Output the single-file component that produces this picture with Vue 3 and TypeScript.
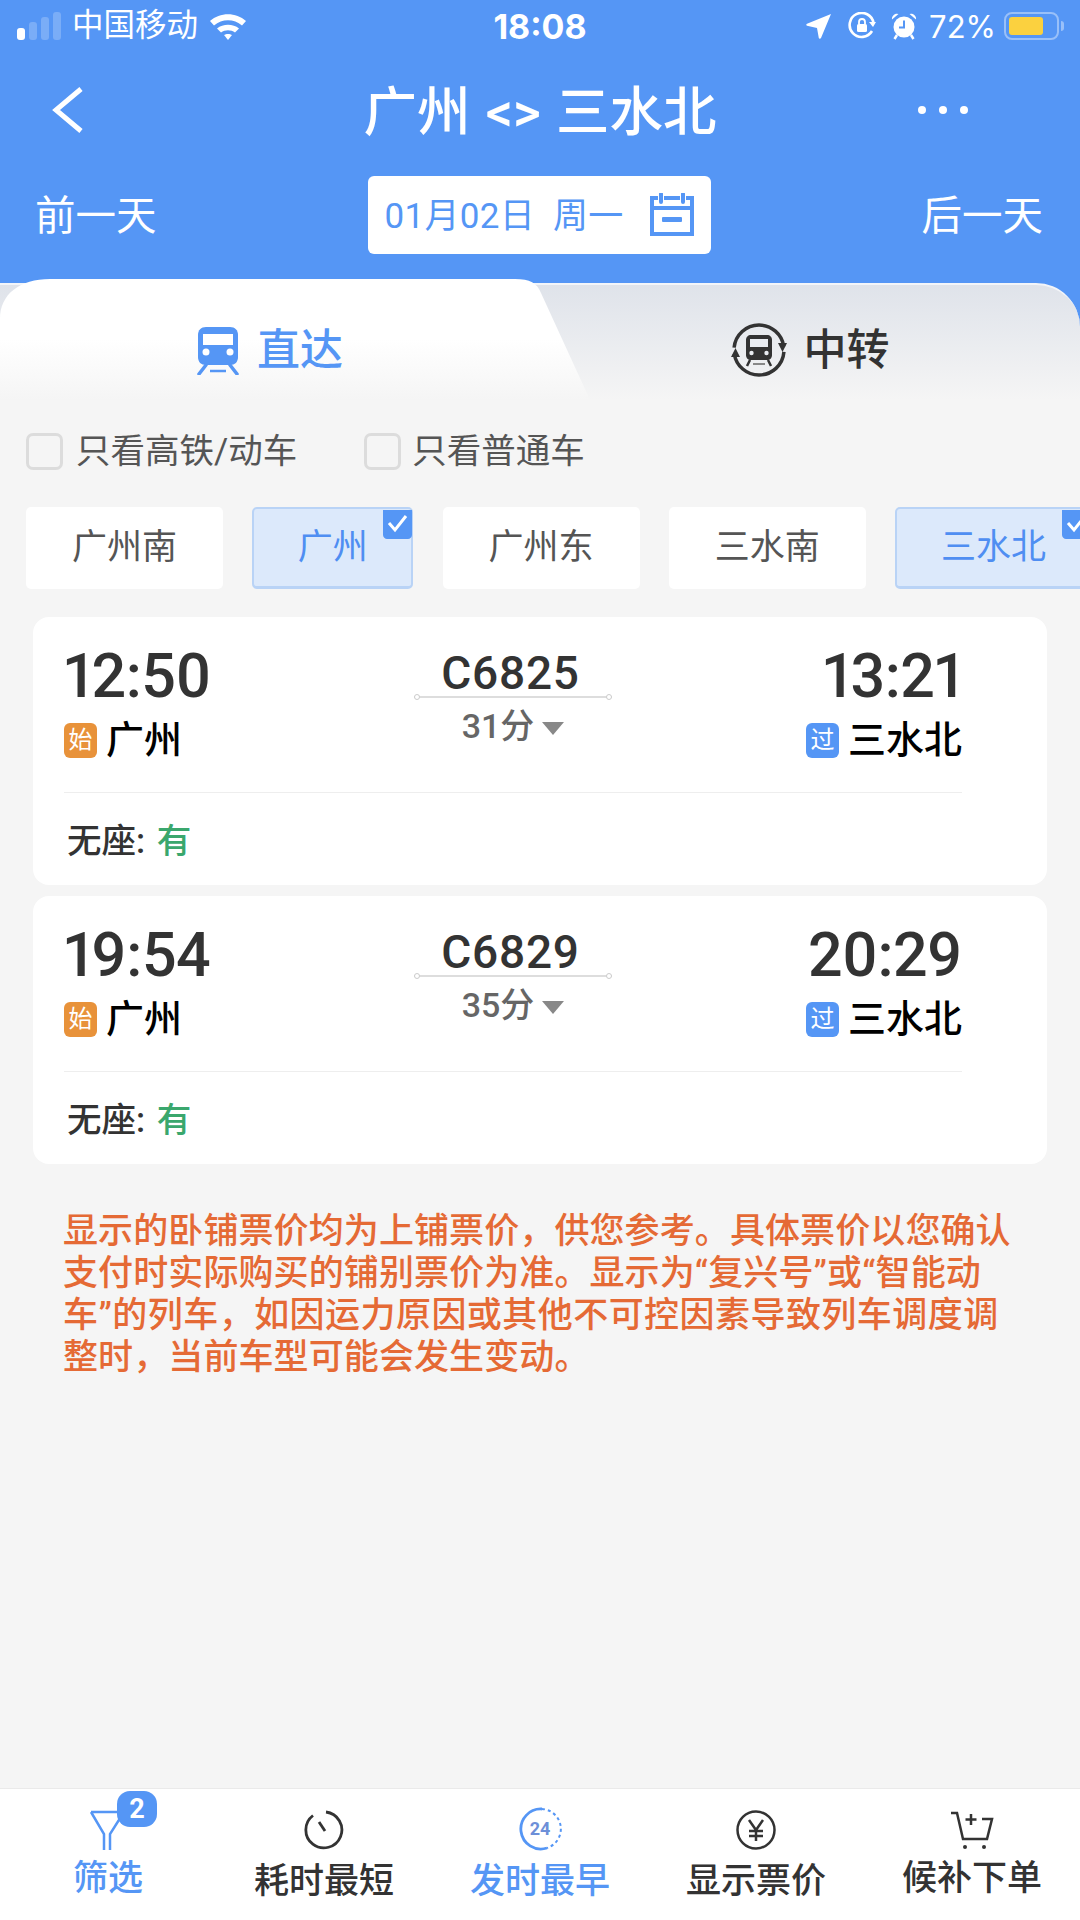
<script setup lang="ts">
interface Train {
  id: string
  from: string
  to: string
  start: string
  end: string
  cost: string
}

const stations = [
  { name: '广州南', on: false },
  { name: '广州', on: true },
  { name: '广州东', on: false },
  { name: '三水南', on: false },
  { name: '三水北', on: true },
]

const trains: Train[] = [
  { id: 'C6825', from: '广州', to: '三水北', start: '12:50', end: '13:21', cost: '31分' },
  { id: 'C6829', from: '广州', to: '三水北', start: '19:54', end: '20:29', cost: '35分' },
]

const notice = [
  '显示的卧铺票价均为上铺票价，供您参考。具体票价以您确认',
  '支付时实际购买的铺别票价为准。显示为“复兴号”或“智能动',
  '车”的列车，如因运力原因或其他不可控因素导致列车调度调',
  '整时，当前车型可能会发生变动。',
]
</script>

<template>
  <div class="page">
    <header class="header">
      <div class="status">
        <div class="status-left">
          <span class="signal">
            <i class="on" style="height: 12px"></i>
            <i style="height: 18px"></i>
            <i style="height: 23px"></i>
            <i style="height: 28px"></i>
          </span>
          <span class="carrier">中国移动</span>
          <svg class="wifi" width="38" height="28" viewBox="0 0 38 28">
            <path d="M1 9C11 0 27 0 37 9L33 13.500C25 6.500 13 6.500 5 13.500Z" fill="#fff" />
            <path d="M8 16.500C14 11.500 24 11.500 30 16.500L26 20.500C22 17.500 16 17.500 12 20.500Z" fill="#fff" />
            <path d="M15 23C17 21.500 21 21.500 23 23L19 28Z" fill="#fff" />
          </svg>
        </div>
        <span class="clock">18:08</span>
        <div class="status-right">
          <svg width="26" height="26" viewBox="0 0 26 26">
            <path d="M25 1L15 25C14.500 26 13 26 12.800 25L11 15L1 12.800C0 12.500 0 11.200 1 10.800Z" fill="#fff" />
          </svg>
          <svg width="28" height="28" viewBox="0 0 28 28" class="rot">
            <path d="M24 19A12 12 0 1 1 25.500 11" fill="none" stroke="#fff" stroke-width="2.600" />
            <path d="M21 10H28L25 15Z" fill="#fff" />
            <rect x="9" y="12" width="10" height="8" rx="1.500" fill="#fff" />
            <path d="M11 12V10A3 3 0 0 1 17 10V12" fill="none" stroke="#fff" stroke-width="1.800" />
          </svg>
          <svg width="26" height="28" viewBox="0 0 26 28" class="alarm">
            <circle cx="13" cy="15" r="10.500" fill="#fff" />
            <path d="M13 8.500V15.500H8" fill="none" stroke="#5596f5" stroke-width="2" />
            <path d="M1 7.500A5 5 0 0 1 7.500 2ZM25 7.500A5 5 0 0 0 18.500 2Z" fill="#fff" />
            <path d="M6 23L3.500 27M20 23L22.500 27" stroke="#fff" stroke-width="2.500" />
          </svg>
          <span class="percent">72%</span>
          <span class="battery"><i></i></span>
          <span class="nub"></span>
        </div>
      </div>

      <div class="title-row">
        <svg width="32" height="46" viewBox="0 0 32 46">
          <path d="M29 2L4 23L29 44" fill="none" stroke="#fff" stroke-width="5" />
        </svg>
        <h1>广州 &lt;&gt; 三水北</h1>
        <span class="more"><i></i><i></i><i></i></span>
      </div>

      <div class="date-row">
        <span>前一天</span>
        <div class="date-box">
          <span>01月02日&nbsp;&nbsp;周一</span>
          <svg width="46" height="44" viewBox="0 0 46 44">
            <path d="M9 5H3V41H43V5H37M15 5H31" fill="none" stroke="#5596f5" stroke-width="4" />
            <path d="M2 15H44" stroke="#5596f5" stroke-width="4" />
            <path d="M12 1V9M34 1V9" stroke="#5596f5" stroke-width="4" stroke-linecap="round" />
            <rect x="13" y="24" width="20" height="5" rx="1" fill="#5596f5" />
          </svg>
        </div>
        <span>后一天</span>
      </div>
    </header>

    <section class="tabs">
      <div class="tabs-back"></div>
      <svg class="tab-shape" width="600" height="121" viewBox="0 0 600 121">
        <defs>
          <linearGradient id="tabFade" x1="0" y1="0" x2="0" y2="1">
            <stop offset="0.5" stop-color="#fff" />
            <stop offset="1" stop-color="#f5f5f5" />
          </linearGradient>
        </defs>
        <path d="M0 121V40C0 15 20 0 50 0H515C530 0 537 4 541 14L590 121Z" fill="url(#tabFade)" />
      </svg>
      <div class="tab tab-on">
        <svg width="42" height="48" viewBox="0 0 42 48">
          <path d="M9 0H33C38 0 41 3 41 8V30C41 35 38 38 33 38H9C4 38 1 35 1 30V8C1 3 4 0 9 0Z" fill="#5596f5" />
          <path d="M6 7H36V18H6Z" fill="#fff" />
          <circle cx="9" cy="25" r="3.500" fill="#fff" />
          <circle cx="33" cy="25" r="3.500" fill="#fff" />
          <path d="M9 38L2 47M33 38L40 47" stroke="#5596f5" stroke-width="3.500" stroke-linecap="round" />
          <path d="M13 44H29" stroke="#5596f5" stroke-width="2.500" />
        </svg>
        <span>直达</span>
      </div>
      <div class="tab">
        <svg width="56" height="56" viewBox="0 0 56 56">
          <circle cx="28" cy="28" r="25" fill="none" stroke="#333" stroke-width="3.500" stroke-dasharray="72 6.500" stroke-dashoffset="-2" />
          <path d="M47 21H56L51.500 30ZM0 35H9L4.500 26Z" fill="#333" />
          <path d="M20 13H36C39 13 41 15 41 18V33C41 36 39 38 36 38H20C17 38 15 36 15 33V18C15 15 17 13 20 13Z" fill="#333" />
          <path d="M19 17H37V25H19Z" fill="#e9ecf1" />
          <circle cx="20.500" cy="31" r="2.200" fill="#e9ecf1" />
          <circle cx="35.500" cy="31" r="2.200" fill="#e9ecf1" />
          <path d="M19 38L16 44M37 38L40 44" stroke="#333" stroke-width="2.500" />
          <path d="M22 42H34" stroke="#888" stroke-width="2" />
        </svg>
        <span>中转</span>
      </div>
    </section>

    <main class="main">
      <div class="checks">
        <label><i></i>只看高铁/动车</label>
        <label class="check-tight"><i></i>只看普通车</label>
      </div>

      <div class="chips">
        <div v-for="s in stations" :key="s.name" class="chip" :class="{ 'chip-on': s.on, 'chip-short': s.name.length === 2 }">
          {{ s.name }}
          <svg v-if="s.on" class="tick" width="29" height="29" viewBox="0 0 29 29">
            <path d="M0 0H29V25C29 27 27 29 25 29H4C2 29 0 27 0 25Z" fill="#5596f5" />
            <path d="M6 13L12 20L23 6" fill="none" stroke="#fff" stroke-width="3" />
          </svg>
        </div>
      </div>

      <article v-for="t in trains" :key="t.id" class="card">
        <div class="route">
          <div class="end">
            <div class="time">{{ t.start }}</div>
            <div class="stop"><b class="badge orange">始</b>{{ t.from }}</div>
          </div>
          <div class="mid">
            <div class="code">{{ t.id }}</div>
            <div class="rail"></div>
            <div class="cost">{{ t.cost }}<i class="arrow"></i></div>
          </div>
          <div class="end end-right">
            <div class="time">{{ t.end }}</div>
            <div class="stop"><b class="badge blue">过</b>{{ t.to }}</div>
          </div>
        </div>
        <div class="seat">无座: <em>有</em></div>
      </article>

      <div class="notice">
        <p v-for="line in notice" :key="line">{{ line }}</p>
      </div>
    </main>

    <nav class="bar">
      <div class="item item-on item-raised">
        <svg width="40" height="40" viewBox="0 0 40 40">
          <path d="M3 2H36M3 2L16 24V40M36 2L22 24V40" fill="none" stroke="#5596f5" stroke-width="2.500" />
        </svg>
        <b class="count">2</b>
        <span>筛选</span>
      </div>
      <div class="item">
        <svg width="40" height="40" viewBox="0 0 40 40">
          <path d="M22 2A18 18 0 1 1 9 5.500" fill="none" stroke="#333" stroke-width="2.800" />
          <path d="M15 12L21 21" stroke="#333" stroke-width="2.800" />
        </svg>
        <span>耗时最短</span>
      </div>
      <div class="item item-on">
        <svg class="day-icon" width="46" height="44" viewBox="0 0 46 44">
          <path d="M25 2A20 20 0 1 0 30 41" fill="none" stroke="#5596f5" stroke-width="2.800" />
          <path d="M25 2A20 20 0 0 1 30 41" fill="none" stroke="#5596f5" stroke-width="2" stroke-dasharray="3 3" />
          <text x="23" y="28" text-anchor="middle" class="day">24</text>
        </svg>
        <span>发时最早</span>
      </div>
      <div class="item">
        <svg width="40" height="40" viewBox="0 0 40 40">
          <circle cx="20" cy="20" r="18.500" fill="none" stroke="#333" stroke-width="2.500" />
          <path d="M13 10L20 20L27 10M20 20V31M13 21H27M13 26H27" fill="none" stroke="#333" stroke-width="2.500" />
        </svg>
        <span>显示票价</span>
      </div>
      <div class="item item-raised">
        <svg width="44" height="40" viewBox="0 0 44 40">
          <path d="M1 3H7L13 29H37L42 9H32" fill="none" stroke="#333" stroke-width="2.500" />
          <path d="M21 4V15M15.500 9.500H26.500" stroke="#333" stroke-width="2.500" />
          <circle cx="15" cy="37" r="2" fill="#333" />
          <circle cx="34" cy="37" r="2" fill="#333" />
        </svg>
        <span>候补下单</span>
      </div>
    </nav>
  </div>
</template>

<style>
html,
body {
  margin: 0;
  background: #f5f5f5;
}
</style>

<style scoped>
.page {
  display: flex;
  flex-direction: column;
  width: 1080px;
  height: 1920px;
  overflow: hidden;
  background: #f5f5f5;
  font-family: Roboto, "Noto Sans CJK SC", sans-serif;
}

.header {
  height: 279px;
  background: #5596f5;
  color: #fff;
}

.status {
  position: relative;
  display: flex;
  justify-content: space-between;
  align-items: center;
  height: 52px;
  padding: 0 16px 0 17px;
}

.status-left,
.status-right {
  display: flex;
  align-items: center;
}

.signal {
  display: flex;
  align-items: flex-end;
  gap: 4px;
  height: 28px;
}

.signal i {
  width: 8px;
  border-radius: 3px;
  background: rgba(255, 255, 255, 0.22);
}

.signal i.on {
  background: #fff;
}

.carrier {
  margin-left: 11px;
  font-size: 31.500px;
  line-height: 52px;
}

.wifi {
  margin-left: 11px;
}

.clock {
  position: absolute;
  left: 0;
  right: 0;
  text-align: center;
  font-family: Inter, sans-serif;
  font-size: 34px;
  font-weight: 700;
}

.rot {
  margin-left: 16px;
}

.alarm {
  margin-left: 15px;
}

.percent {
  margin-left: 12px;
  font-family: Inter, sans-serif;
  font-size: 31px;
}

.battery {
  display: block;
  box-sizing: border-box;
  width: 55px;
  height: 28px;
  margin-left: 8px;
  padding: 3px;
  border: 2px solid rgba(255, 255, 255, 0.4);
  border-radius: 8px;
}

.battery i {
  display: block;
  width: 34px;
  height: 18px;
  border-radius: 3px;
  background: #fbd13f;
}

.nub {
  width: 3px;
  height: 10px;
  margin-left: 2px;
  border-radius: 0 3px 3px 0;
  background: rgba(255, 255, 255, 0.4);
}

.title-row {
  display: flex;
  justify-content: space-between;
  align-items: center;
  height: 116px;
  padding: 0 112px 0 52px;
  position: relative;
}

.title-row h1 {
  position: absolute;
  left: 0;
  right: 0;
  margin: -6px 0 0;
  text-align: center;
  font-size: 53.500px;
  font-weight: 500;
  word-spacing: 2px;
}

.more {
  display: flex;
  gap: 13px;
}

.more i {
  width: 8px;
  height: 8px;
  border-radius: 50%;
  background: #fff;
}

.date-row {
  display: flex;
  justify-content: space-between;
  align-items: center;
  height: 78px;
  margin-top: 8px;
  padding: 0 37px 0 35px;
  font-size: 40.500px;
}

.date-row > span,
.date-box > span {
  padding-bottom: 6px;
}

.date-box {
  display: flex;
  align-items: center;
  justify-content: space-between;
  box-sizing: border-box;
  width: 343px;
  height: 78px;
  padding: 0 16px 0 17px;
  border-radius: 6px;
  background: #fff;
  color: #5596f5;
  font-size: 35px;
  letter-spacing: 0.300px;
}

.date-box svg {
  margin-top: -1px;
}

.tabs {
  position: relative;
  display: grid;
  grid-template-columns: 1fr 1fr;
  height: 121px;
  background: linear-gradient(#5596f5 0 50px, #f5f5f5 50px);
}

.tabs-back {
  position: absolute;
  inset: 4px 0 0;
  border-top: 2px solid #f3f5f9;
  border-radius: 0 44px 0 0;
  background: linear-gradient(#dfe3ea, #f5f5f5);
}

.tab-shape {
  position: absolute;
  top: 0;
  left: 0;
}

.tab {
  position: relative;
  display: flex;
  justify-content: center;
  align-items: flex-start;
  gap: 17px;
  padding-top: 43px;
  color: #333;
  font-size: 43px;
  font-weight: 500;
  line-height: 48px;
}

.tab > span {
  margin-top: 4px;
}

.tab-on {
  gap: 18px;
  padding-top: 48px;
  color: #5596f5;
}

.tab-on > span {
  margin-top: -1px;
}

.main {
  flex: 1;
  min-height: 0;
}

.checks {
  display: flex;
  gap: 67px;
  padding: 33px 26px 0;
  color: #555;
  font-size: 34.500px;
  line-height: 37px;
}

.checks label {
  display: flex;
  align-items: center;
  gap: 13px;
}

.checks .check-tight {
  gap: 11px;
}

.checks i {
  box-sizing: border-box;
  width: 37px;
  height: 37px;
  border: 3px solid #dcdcdc;
  border-radius: 7px;
}

.chips {
  display: flex;
  gap: 29.250px;
  width: 1200px;
  margin-top: 37px;
  padding-left: 26px;
}

.chip {
  position: relative;
  flex: none;
  box-sizing: border-box;
  width: 197px;
  height: 82px;
  border-radius: 5px;
  background: #fff;
  color: #555;
  font-size: 35px;
  line-height: 82px;
  text-align: center;
}

.chip-short {
  width: 161px;
}

.chip-on {
  border: 2px solid #b9d3f6;
  border-bottom-width: 3px;
  background: #dce9fb;
  color: #4f8ef2;
  line-height: 78px;
}

.tick {
  position: absolute;
  top: 1px;
  right: -1px;
}

.card {
  box-sizing: border-box;
  height: 268px;
  margin: 28px 33px 0;
  padding: 0 85px 0 31px;
  border-radius: 16px;
  background: #fff;
}

.card + .card {
  margin-top: 11px;
}

.route {
  display: grid;
  grid-template-columns: 1fr 198px 1fr;
  height: 176px;
  border-bottom: 1px solid #eee;
  box-sizing: border-box;
}

.end {
  padding-top: 26px;
}

.end-right {
  text-align: right;
}

.time {
  color: #333;
  font-size: 61px;
  font-weight: 500;
  line-height: 66px;
  letter-spacing: -0.500px;
  font-variant-numeric: proportional-nums;
}

.stop {
  display: flex;
  align-items: center;
  margin-top: 8px;
  color: #000;
  font-size: 38px;
  font-weight: 500;
  line-height: 46px;
}

.end-right .stop {
  justify-content: flex-end;
}

.badge {
  width: 33px;
  height: 35px;
  margin-right: 9px;
  border-radius: 6px;
  color: #fff;
  font-size: 24px;
  font-weight: 400;
  line-height: 35px;
  text-align: center;
}

.orange {
  background: #e8923a;
}

.blue {
  background: #5596f5;
}

.mid {
  padding-top: 33px;
  text-align: center;
}

.code {
  padding-right: 5px;
  color: #333;
  font-size: 46px;
  font-weight: 500;
  line-height: 46px;
  letter-spacing: 0.800px;
}

.rail {
  position: relative;
  height: 2px;
  background: #ddd;
}

.rail::before,
.rail::after {
  content: "";
  position: absolute;
  top: -2px;
  box-sizing: border-box;
  width: 6px;
  height: 6px;
  border: 1px solid #ccc;
  border-radius: 50%;
  background: #fff;
}

.rail::before {
  left: 0;
}

.rail::after {
  right: 0;
}

.cost {
  display: flex;
  justify-content: center;
  align-items: center;
  gap: 8px;
  margin-top: 6px;
  color: #666;
  font-size: 34px;
  font-weight: 500;
  line-height: 44px;
}

.arrow {
  width: 0;
  height: 0;
  margin-top: 5px;
  border-top: 13px solid #888;
  border-left: 11px solid transparent;
  border-right: 11px solid transparent;
}

.seat {
  padding: 26px 3px 0;
  color: #333;
  font-size: 34.500px;
  font-weight: 500;
  line-height: 44px;
}

.seat em {
  color: #3aa76d;
  font-style: normal;
  margin-left: 3px;
}

.notice {
  margin: 47px 0 0 63px;
  color: #e56a35;
  font-size: 35px;
  font-weight: 500;
  line-height: 42px;
  letter-spacing: 0.100px;
}

.notice p {
  margin: 0;
  white-space: nowrap;
}

.notice p:nth-child(3) {
  letter-spacing: 0.450px;
}

.bar {
  display: grid;
  grid-template-columns: repeat(5, 1fr);
  height: 132px;
  border-top: 1px solid #eaeaea;
  box-sizing: border-box;
  background: #fff;
}

.item {
  position: relative;
  display: flex;
  flex-direction: column;
  align-items: center;
  padding-top: 21px;
  color: #333;
  font-size: 35px;
  font-weight: 500;
}

.item svg {
  height: 40px;
}

.item svg.day-icon {
  height: 44px;
  margin: -3px 0 -1px;
}

.item span {
  margin-top: 8px;
  line-height: 48px;
}

.item-raised span {
  margin-top: 5px;
}

.item-on {
  color: #5596f5;
}

.count {
  position: absolute;
  top: 2px;
  left: 117px;
  width: 40px;
  height: 36px;
  border-radius: 13px;
  background: #5596f5;
  color: #fff;
  font-size: 27px;
  line-height: 36px;
  text-align: center;
}

.day {
  fill: #6d8fd8;
  font-size: 18px;
  font-weight: 700;
}
</style>
